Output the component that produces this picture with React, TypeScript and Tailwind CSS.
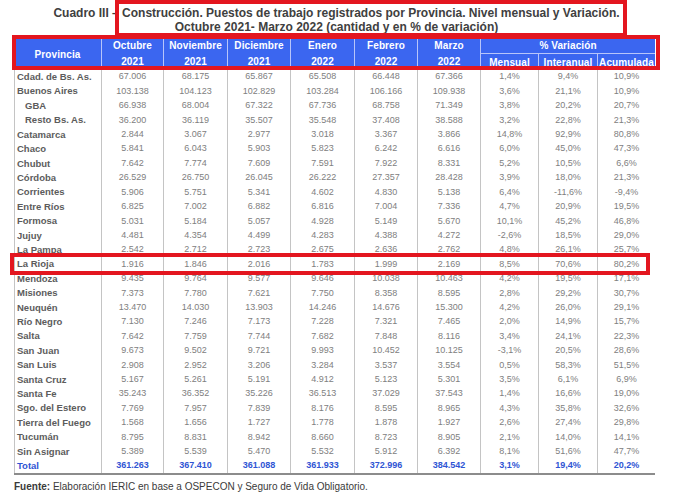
import React from 'react';

type Row = { name: string; vals: string[]; indent?: boolean; total?: boolean };

const rows: Row[] = [
  { name: 'Cdad. de Bs. As.', vals: ['67.006', '68.175', '65.867', '65.508', '66.448', '67.366', '1,4%', '9,4%', '10,9%'] },
  { name: 'Buenos Aires', vals: ['103.138', '104.123', '102.829', '103.284', '106.166', '109.938', '3,6%', '21,1%', '10,9%'] },
  { name: 'GBA', indent: true, vals: ['66.938', '68.004', '67.322', '67.736', '68.758', '71.349', '3,8%', '20,2%', '20,7%'] },
  { name: 'Resto Bs. As.', indent: true, vals: ['36.200', '36.119', '35.507', '35.548', '37.408', '38.588', '3,2%', '22,8%', '21,3%'] },
  { name: 'Catamarca', vals: ['2.844', '3.067', '2.977', '3.018', '3.367', '3.866', '14,8%', '92,9%', '80,8%'] },
  { name: 'Chaco', vals: ['5.841', '6.043', '5.903', '5.823', '6.242', '6.616', '6,0%', '45,0%', '47,3%'] },
  { name: 'Chubut', vals: ['7.642', '7.774', '7.609', '7.591', '7.922', '8.331', '5,2%', '10,5%', '6,6%'] },
  { name: 'Córdoba', vals: ['26.529', '26.750', '26.045', '26.222', '27.357', '28.428', '3,9%', '18,0%', '21,3%'] },
  { name: 'Corrientes', vals: ['5.906', '5.751', '5.341', '4.602', '4.830', '5.138', '6,4%', '-11,6%', '-9,4%'] },
  { name: 'Entre Ríos', vals: ['6.825', '7.002', '6.882', '6.816', '7.004', '7.336', '4,7%', '20,9%', '19,5%'] },
  { name: 'Formosa', vals: ['5.031', '5.184', '5.057', '4.928', '5.149', '5.670', '10,1%', '45,2%', '46,8%'] },
  { name: 'Jujuy', vals: ['4.481', '4.354', '4.499', '4.283', '4.388', '4.272', '-2,6%', '18,5%', '29,0%'] },
  { name: 'La Pampa', vals: ['2.542', '2.712', '2.723', '2.675', '2.636', '2.762', '4,8%', '26,1%', '25,7%'] },
  { name: 'La Rioja', vals: ['1.916', '1.846', '2.016', '1.783', '1.999', '2.169', '8,5%', '70,6%', '80,2%'] },
  { name: 'Mendoza', vals: ['9.435', '9.764', '9.577', '9.646', '10.038', '10.463', '4,2%', '19,5%', '17,1%'] },
  { name: 'Misiones', vals: ['7.373', '7.780', '7.621', '7.750', '8.358', '8.595', '2,8%', '29,2%', '30,7%'] },
  { name: 'Neuquén', vals: ['13.470', '14.030', '13.903', '14.246', '14.676', '15.300', '4,2%', '26,0%', '29,1%'] },
  { name: 'Río Negro', vals: ['7.130', '7.246', '7.173', '7.228', '7.321', '7.465', '2,0%', '14,9%', '15,7%'] },
  { name: 'Salta', vals: ['7.642', '7.759', '7.744', '7.682', '7.848', '8.116', '3,4%', '24,1%', '22,3%'] },
  { name: 'San Juan', vals: ['9.673', '9.502', '9.721', '9.993', '10.452', '10.125', '-3,1%', '20,5%', '28,6%'] },
  { name: 'San Luis', vals: ['2.908', '2.952', '3.206', '3.284', '3.537', '3.554', '0,5%', '58,3%', '51,5%'] },
  { name: 'Santa Cruz', vals: ['5.167', '5.261', '5.191', '4.912', '5.123', '5.301', '3,5%', '6,1%', '6,9%'] },
  { name: 'Santa Fe', vals: ['35.243', '36.352', '35.226', '36.513', '37.029', '37.543', '1,4%', '16,6%', '19,0%'] },
  { name: 'Sgo. del Estero', vals: ['7.769', '7.957', '7.839', '8.176', '8.595', '8.965', '4,3%', '35,8%', '32,6%'] },
  { name: 'Tierra del Fuego', vals: ['1.568', '1.656', '1.727', '1.778', '1.878', '1.927', '2,6%', '27,4%', '29,8%'] },
  { name: 'Tucumán', vals: ['8.795', '8.831', '8.942', '8.660', '8.723', '8.905', '2,1%', '14,0%', '14,1%'] },
  { name: 'Sin Asignar', vals: ['5.389', '5.539', '5.470', '5.532', '5.912', '6.392', '8,1%', '51,6%', '47,7%'] },
  { name: 'Total', total: true, vals: ['361.263', '367.410', '361.088', '361.933', '372.996', '384.542', '3,1%', '19,4%', '20,2%'] },
];

const months = [
  ['Octubre', '2021'],
  ['Noviembre', '2021'],
  ['Diciembre', '2021'],
  ['Enero', '2022'],
  ['Febrero', '2022'],
  ['Marzo', '2022'],
];

const cols = 'grid grid-cols-[87px_62px_64px_63px_64px_63px_63px_58px_59px_58px]';

export default function App() {
  return (
    <div className="relative h-[501px] w-[673px] bg-white font-['Liberation_Sans',Arial,sans-serif]">
      {/* Titulo */}
      <div className="flex h-[38px] flex-col items-center pt-[6px] text-[12px] font-bold leading-[14px] text-[#404040]">
        <div>Cuadro III – Construcción. Puestos de trabajo registrados por Provincia. Nivel mensual y Variación.</div>
        <div>Octubre 2021- Marzo 2022 (cantidad y en % de variación)</div>
      </div>

      <div className="ml-[14px] w-[641px]">
        {/* Encabezado */}
        <div className={`${cols} h-[32px] grid-rows-[16px_16px] bg-[#3b66f0] text-[10px] font-bold tracking-[0.1px] text-white`}>
          <div className="row-span-2 flex items-center justify-center">Provincia</div>
          {months.map(([m, y]) => (
            <div key={m} className="row-span-2 flex flex-col border-l border-[#b8c5fa] text-center leading-[16px]">
              <span>{m}</span>
              <span>{y}</span>
            </div>
          ))}
          <div className="col-span-3 flex items-center justify-center border-b border-l border-[#b8c5fa]">% Variación</div>
          <div className="flex items-center justify-center border-l border-[#b8c5fa]">Mensual</div>
          <div className="flex items-center justify-center border-l border-[#b8c5fa]">Interanual</div>
          <div className="flex items-center justify-center border-l border-[#b8c5fa]">Acumulada</div>
        </div>

        {/* Filas */}
        <div className="border-b-2 border-[#8c8c8c]">
          {rows.map((r) => (
            <div key={r.name} className={`${cols} h-[14.42px]`}>
              <div
                className={`flex items-center border-l border-[#c4c4c4] text-[9.5px] font-bold ${
                  r.indent ? 'pl-[10px]' : 'pl-[2px]'
                } ${r.total ? 'text-[#2f55d4]' : 'text-[#5c5c5c]'}`}
              >
                {r.name}
              </div>
              {r.vals.map((v, i) => (
                <div
                  key={i}
                  className={`flex items-center justify-center border-l border-[#c4c4c4] text-[9px] ${
                    r.total ? 'font-bold text-[#2f55d4]' : 'text-[#808080]'
                  }`}
                >
                  {v}
                </div>
              ))}
            </div>
          ))}
        </div>
      </div>

      {/* Fuente */}
      <div className="mt-[5px] pl-[14px] text-[10px] leading-[14px] text-[#3a3a3a]">
        <span className="font-bold">Fuente:</span> Elaboración IERIC en base a OSPECON y Seguro de Vida Obligatorio.
      </div>

      {/* Recuadros rojos */}
      <div className="pointer-events-none absolute left-[115px] top-0 h-[37px] w-[512px] border-4 border-[#e3161f]" />
      <div className="pointer-events-none absolute left-[12px] top-[35px] h-[35px] w-[648px] border-4 border-[#e3161f]" />
      <div className="pointer-events-none absolute left-[10px] top-[253px] h-[22px] w-[640px] border-4 border-[#e3161f]" />
    </div>
  );
}
